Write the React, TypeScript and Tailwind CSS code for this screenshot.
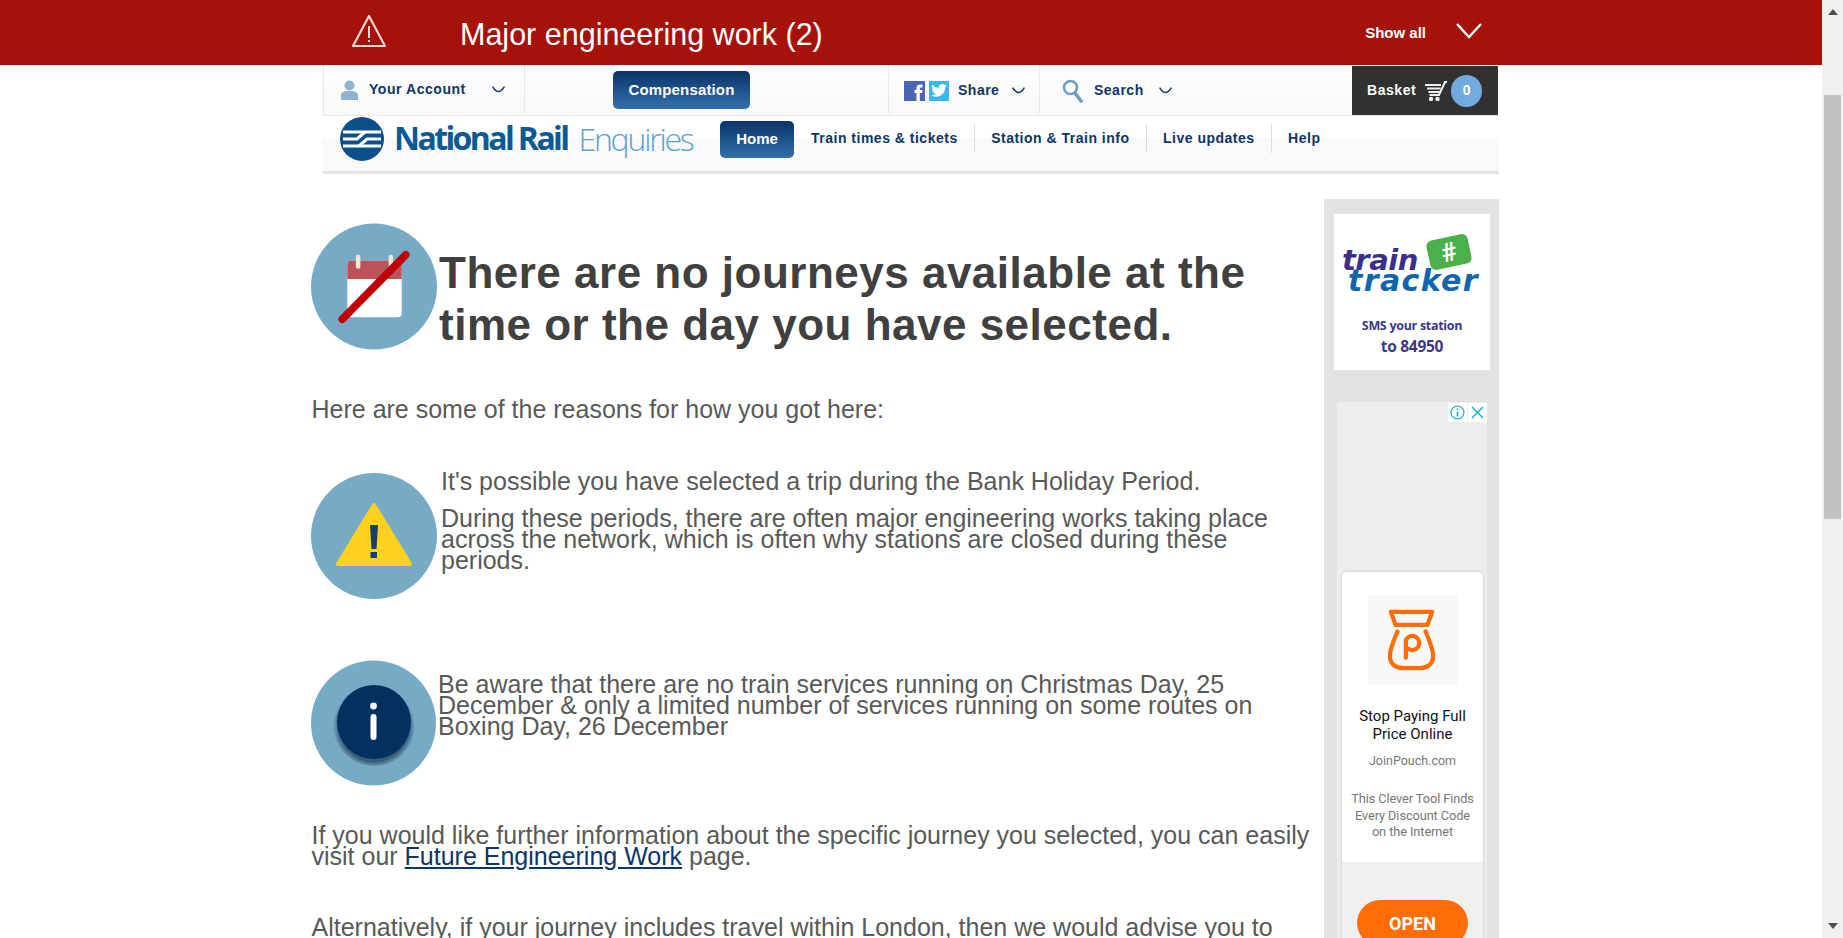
import React from 'react';

const Chevron = ({ className = '' }: { className?: string }) => (
  <svg width="13" height="7" viewBox="0 0 13 7" fill="none" stroke="#1b3f6e" strokeWidth="1.6" strokeLinecap="round" className={className}>
    <path d="M1 1.2 Q3.5 5.5 6.5 5.5 Q9.5 5.5 12 1.2" />
  </svg>
);

const NavLink = ({ label, last }: { label: string; last?: boolean }) => (
  <div className={`h-[29px] flex items-center pl-[16px] pr-[16.5px] ${last ? '' : 'border-r border-[#dddddd]'}`}>
    <span className="text-[14px] font-bold text-[#0e3567] tracking-[0.5px] whitespace-nowrap">{label}</span>
  </div>
);

const TopBar = () => (
  <div className="ml-[323px] w-[1175px] h-[51px] flex bg-gradient-to-b from-white to-[#f8f8f8] border-l border-b border-[#e8e8e8]">
    <div className="w-[201px] h-[49px] border-r border-[#e8e8e8] flex items-center pl-[17px] shrink-0">
      <svg width="17" height="20" viewBox="0 0 17 20" fill="#8fb4d3">
        <circle cx="8.5" cy="5.5" r="5" />
        <path d="M0 20 V15 Q0 12 5 11 H12 Q17 12 17 15 V20 Z" />
      </svg>
      <span className="ml-[11px] text-[14px] font-bold text-[#0e3567] tracking-[0.55px]">Your Account</span>
      <Chevron className="ml-[26px]" />
    </div>
    <div className="w-[364px] flex items-start pl-[88px] pt-[6px] shrink-0 border-r border-[#e8e8e8] h-[49px]">
      <div className="w-[137px] h-[38px] rounded-[5px] bg-gradient-to-b from-[#0b3468] to-[#3470ac] flex items-center justify-center text-white text-[15px] font-bold tracking-[0.15px]">
        Compensation
      </div>
    </div>
    <div className="w-[151px] h-[49px] border-r border-[#e8e8e8] flex items-center pl-[15px] pt-[2px] shrink-0">
      <div className="w-[21px] h-[20px] bg-[#4a66b0] flex items-end justify-end overflow-hidden">
        <svg width="13" height="18" viewBox="0 0 12 18" fill="#fff">
          <path d="M4 18 V10 H2 V7 H4 V5 Q4 1.5 7.5 1.5 H10 V4.5 H8.3 Q7.3 4.5 7.3 5.6 V7 H10 L9.6 10 H7.3 V18 Z" />
        </svg>
      </div>
      <div className="ml-[4px] w-[20px] h-[20px] bg-[#3cb6ef] flex items-center justify-center">
        <svg width="16" height="13" viewBox="0 0 24 20" fill="#fff">
          <path d="M24 2.4a9.7 9.7 0 0 1-2.8.8A5 5 0 0 0 23.3.5a9.8 9.8 0 0 1-3.1 1.2 4.9 4.9 0 0 0-8.4 4.5A14 14 0 0 1 1.7 1a4.9 4.9 0 0 0 1.5 6.6 4.9 4.9 0 0 1-2.2-.6 4.9 4.9 0 0 0 3.9 4.9 5 5 0 0 1-2.2.1 4.9 4.9 0 0 0 4.6 3.4A9.9 9.9 0 0 1 0 17.4 14 14 0 0 0 21.5 5a10 10 0 0 0 2.5-2.6Z" />
        </svg>
      </div>
      <span className="ml-[9px] text-[14px] font-bold text-[#0e3567] tracking-[0.5px]">Share</span>
      <Chevron className="ml-[13px]" />
    </div>
    <div className="w-[312px] h-[49px] flex items-center pl-[21px] pt-[2px] shrink-0">
      <svg width="23" height="24" viewBox="0 0 21 24" fill="none" stroke="#6d9dc4" className="shrink-0">
        <circle cx="8.5" cy="8.5" r="6.5" strokeWidth="2.6" />
        <path d="M13 14 L19 22" strokeWidth="3.6" strokeLinecap="round" />
      </svg>
      <span className="ml-[10px] text-[14px] font-bold text-[#0e3567] tracking-[0.5px]">Search</span>
      <Chevron className="ml-[15px]" />
    </div>
    <div className="w-[146px] h-[49px] bg-[#313131] flex items-center pl-[15px] shrink-0 mt-[1px]">
      <span className="text-white text-[14px] font-bold tracking-[0.55px]">Basket</span>
      <svg width="24" height="20" viewBox="0 0 22 20" fill="none" stroke="#eeeeee" strokeWidth="2" className="ml-[8px]">
        <path d="M0 4 H16 M2 7.5 H15.5 M3.5 11 H14.5 M4.5 14 H14 L20 1 H22" />
        <circle cx="6" cy="18" r="1.2" />
        <circle cx="12.5" cy="18" r="1.2" />
      </svg>
      <div className="ml-[3px] w-[31px] h-[32px] rounded-full bg-[#72a9de] flex items-center justify-center text-white text-[14px] font-bold">0</div>
    </div>
  </div>
);

const NavBar = () => (
  <div className="ml-[323px] w-[1176px] h-[58px] border-b-[3px] border-[#e3e3e3] bg-gradient-to-b from-white from-[40%] to-[#f9f9f9] to-[40%] flex">
    <div className="ml-[17px] w-[380px] shrink-0 flex items-start">
      <svg width="44" height="44" viewBox="0 0 44 44" className="shrink-0 mt-[1px]">
        <circle cx="22" cy="22" r="22" fill="#0c4f8a" />
        <g stroke="#fff" strokeWidth="3" fill="none">
          <path d="M3 15 H41 M3 29 H41" />
          <path d="M3 22 H17 L25 15 M19 29 L27 22 H41" />
        </g>
      </svg>
      <span className="ml-[10px] mt-[3px] text-[32px] leading-[38px] font-bold text-[#0b5a94] tracking-[-2.6px] whitespace-nowrap font-['Open_Sans',sans-serif]">National Rail</span>
      <span className="ml-[11px] mt-[4px] text-[32px] leading-[38px] font-light text-[#5da1d4] tracking-[-2.2px] whitespace-nowrap font-['Open_Sans',sans-serif]">Enquiries</span>
    </div>
    <div className="mt-[5px] w-[74px] h-[37px] rounded-[5px] bg-gradient-to-b from-[#0b3468] to-[#3470ac] flex items-center justify-center text-white text-[15px] font-bold shrink-0">Home</div>
    <div className="ml-[1px] flex mt-[8px] h-[29px] items-center">
      <NavLink label="Train times & tickets" />
      <NavLink label="Station & Train info" />
      <NavLink label="Live updates" />
      <NavLink label="Help" last />
    </div>
  </div>
);

const CalendarIcon = () => (
  <svg viewBox="0 0 125 125" className="w-[126px] h-[127px] shrink-0">
    <circle cx="62.5" cy="62.5" r="62.5" fill="#76aac5" />
    <rect x="36" y="37" width="54" height="56" rx="4" fill="#fff" />
    <path d="M36 55 V41 Q36 37 40 37 H86 Q90 37 90 41 V55 Z" fill="#bd5258" />
    <rect x="44.5" y="31" width="4.5" height="14" rx="2" fill="#ece8d4" />
    <rect x="77" y="31" width="4.5" height="14" rx="2" fill="#ece8d4" />
    <path d="M31 95 L94 31" stroke="#c00009" strokeWidth="7.5" strokeLinecap="round" />
  </svg>
);

const WarnIcon = () => (
  <svg viewBox="0 0 126 128" className="w-[126px] h-[128px] shrink-0">
    <circle cx="63" cy="64" r="63" fill="#76aac5" />
    <path d="M63 33 L27 92 H99 Z" fill="#ffd11f" stroke="#ffd11f" strokeWidth="4" strokeLinejoin="round" />
    <path d="M59 53 H67 L65.5 77 H60.5 Z" fill="#17406f" />
    <rect x="59.5" y="80" width="6.5" height="6" fill="#17406f" />
  </svg>
);

const InfoIcon = () => (
  <svg viewBox="0 0 125 126" className="w-[125px] h-[126px] shrink-0">
    <defs>
      <radialGradient id="sh" cx="50%" cy="52%" r="50%">
        <stop offset="85%" stopColor="#1d3c5c" stopOpacity="0.7" />
        <stop offset="100%" stopColor="#1d3c5c" stopOpacity="0" />
      </radialGradient>
    </defs>
    <circle cx="62.5" cy="63" r="62.5" fill="#76aac5" />
    <circle cx="63" cy="65" r="41" fill="url(#sh)" />
    <circle cx="63" cy="62" r="37" fill="#03305f" />
    <circle cx="62.5" cy="46" r="3.4" fill="#fff" />
    <rect x="59.5" y="54" width="6" height="26" rx="3" fill="#fff" />
  </svg>
);

const Sidebar = () => (
  <div className="w-[175px] shrink-0 mt-[25px] h-[800px] bg-[#e3e3e3] font-['Roboto',sans-serif]">
    <div className="mt-[15px] ml-[10px] w-[156px] h-[156px] bg-white flex flex-col items-center">
      <div className="mt-[20px] w-[156px] relative h-[58px]">
        <span className="absolute left-[8px] top-[12px] text-[29px] leading-[28px] font-bold italic text-[#3b2f8b] tracking-[-0.5px] font-['DejaVu_Sans',sans-serif]">train</span>
        <span className="absolute left-[14px] top-[33px] text-[30px] leading-[28px] font-bold italic text-[#0f66ad] tracking-[1.4px] whitespace-nowrap font-['DejaVu_Sans',sans-serif]">tracker</span>
        <div className="absolute left-[94px] top-[3px] w-[42px] h-[30px] rounded-[6px] bg-[#4cb04a] -rotate-12 flex items-center justify-center text-white text-[26px] leading-none font-bold">#</div>
      </div>
      <div className="mt-[24px] text-[12.5px] font-bold text-[#3f3785] tracking-[-0.3px] leading-[20px] font-['Open_Sans',sans-serif]">SMS your station</div>
      <div className="text-[15.5px] font-bold text-[#3f3785] tracking-[-0.3px] leading-[20px] font-['Open_Sans',sans-serif]">to 84950</div>
    </div>
    <div className="relative mt-[32px] ml-[13px] w-[150px] h-[700px] bg-[#ededed]">
      <div className="absolute right-0 top-[1px] flex gap-[1px]">
        <div className="w-[19px] h-[19px] bg-white flex items-center justify-center">
          <svg width="15" height="15" viewBox="0 0 15 15" fill="none" stroke="#00aecd" strokeWidth="1.1">
            <circle cx="7.5" cy="7.5" r="6.5" />
            <path d="M7.5 6.5 V11.5 M7.5 3.5 V5" strokeWidth="1.5" />
          </svg>
        </div>
        <div className="w-[19px] h-[19px] bg-white flex items-center justify-center">
          <svg width="13" height="13" viewBox="0 0 13 13" fill="none" stroke="#00aecd" strokeWidth="1.3">
            <path d="M1 1 L12 12 M12 1 L1 12" />
          </svg>
        </div>
      </div>
      <div className="ml-[5px] pt-[170px] w-[141px]">
        <div className="w-[141px] rounded-t-[5px] overflow-hidden shadow-[0_0_3px_rgba(0,0,0,0.2)] bg-[#f1f0f0] h-[400px]">
          <div className="h-[290px] bg-white flex flex-col items-center">
            <div className="mt-[23px] w-[90px] h-[90px] bg-[#f8f8f8] flex items-center justify-center">
              <svg width="47" height="64" viewBox="0 0 50 66" fill="none" stroke="#ff6e06" strokeWidth="4.5" strokeLinecap="round" strokeLinejoin="round" className="mr-[2px]">
                <path d="M3 3 H47 L42 17 H8 Z" />
                <path d="M10 24 C6 34 2 42 2 50 C2 59 9 63 16 63 H34 C41 63 48 59 48 50 C48 42 44 34 40 24" />
                <path d="M19 52 V33 A7.5 7.5 0 1 1 21 42" />
              </svg>
            </div>
            <div className="mt-[22px] text-center text-[15px] leading-[18px] text-[#111]">Stop Paying Full<br />Price Online</div>
            <div className="mt-[10px] text-[12.5px] leading-[16px] text-[#777]">JoinPouch.com</div>
            <div className="mt-[22px] text-center text-[12.8px] leading-[16.5px] text-[#777] tracking-[-0.1px]">This Clever Tool Finds<br />Every Discount Code<br />on the Internet</div>
          </div>
          <div className="flex justify-center pt-[38px]">
            <div className="w-[111px] h-[46px] rounded-full bg-[#ff6e06] flex items-center justify-center text-white text-[18px] font-bold">OPEN</div>
          </div>
        </div>
      </div>
    </div>
  </div>
);

const Scrollbar = () => (
  <div className="w-[21px] h-[938px] shrink-0 bg-[#f0f0f0] flex flex-col items-center pt-[9px] pb-[9px]">
    <svg width="10" height="6" viewBox="0 0 10 6" fill="#505050"><path d="M5 0 L10 6 H0 Z" /></svg>
    <div className="mt-[80px] w-[17px] h-[424px] bg-[#c1c1c1]" />
    <div className="flex-1" />
    <svg width="10" height="6" viewBox="0 0 10 6" fill="#505050"><path d="M0 0 H10 L5 6 Z" /></svg>
  </div>
);

export default function App() {
  return (
    <div className="h-[938px] w-full flex overflow-hidden bg-white font-['Liberation_Sans',Arial,sans-serif]">
      <div className="flex-1 min-w-0">
        <div className="h-[65px] bg-[#a5120a] flex items-center">
          <svg width="36" height="34" viewBox="0 0 36 34" fill="none" stroke="#f4d7d5" strokeWidth="2.2" className="ml-[351px] mb-[3px]">
            <path d="M18 2 L34 32 H2 Z" strokeLinejoin="round" />
            <path d="M18 12 V24 M18 26 V28" strokeWidth="2" />
          </svg>
          <span className="ml-[73px] mt-[3px] text-[30.5px] text-white leading-none">Major engineering work (2)</span>
          <span className="ml-auto mt-[1px] text-[15px] font-bold text-white">Show all</span>
          <svg width="28" height="16" viewBox="0 0 26 16" fill="none" stroke="#fff" strokeWidth="2.4" className="ml-[29px] mr-[339px] mb-[4px]">
            <path d="M1 1 L13 14 L25 1" />
          </svg>
        </div>
        <TopBar />
        <NavBar />
        <div className="ml-[311px] flex">
          <div className="w-[1013px] shrink-0 text-[25px] leading-[21px] text-[#595959]">
            <div className="mt-[49px] flex items-start">
              <CalendarIcon />
              <h1 className="ml-[2px] mt-[24px] text-[44px] leading-[52px] font-bold text-[#404040] tracking-[0.5px]">
                There are no journeys available at the time or the day you have selected.
              </h1>
            </div>
            <p className="mt-[48px] pl-[0.5px]">Here are some of the reasons for how you got here:</p>
            <div className="mt-[52px] flex items-start">
              <WarnIcon />
              <div className="ml-[4px] pr-[20px]">
                <p className="mt-[-1px]">It's possible you have selected a trip during the Bank Holiday Period.</p>
                <p className="mt-[16px]">During these periods, there are often major engineering works taking place across the network, which is often why stations are closed during these periods.</p>
              </div>
            </div>
            <div className="mt-[60px] flex items-start">
              <InfoIcon />
              <p className="ml-[2px] mt-[14px] pr-[40px]">Be aware that there are no train services running on Christmas Day, 25 December &amp; only a limited number of services running on some routes on Boxing Day, 26 December</p>
            </div>
            <p className="mt-[39px] pl-[0.5px]">If you would like further information about the specific journey you selected, you can easily visit our <a className="text-[#0e3567] underline">Future Engineering Work</a> page.</p>
            <p className="mt-[50px] pl-[0.5px]">Alternatively, if your journey includes travel within London, then we would advise you to</p>
          </div>
          <Sidebar />
        </div>
      </div>
      <Scrollbar />
    </div>
  );
}
